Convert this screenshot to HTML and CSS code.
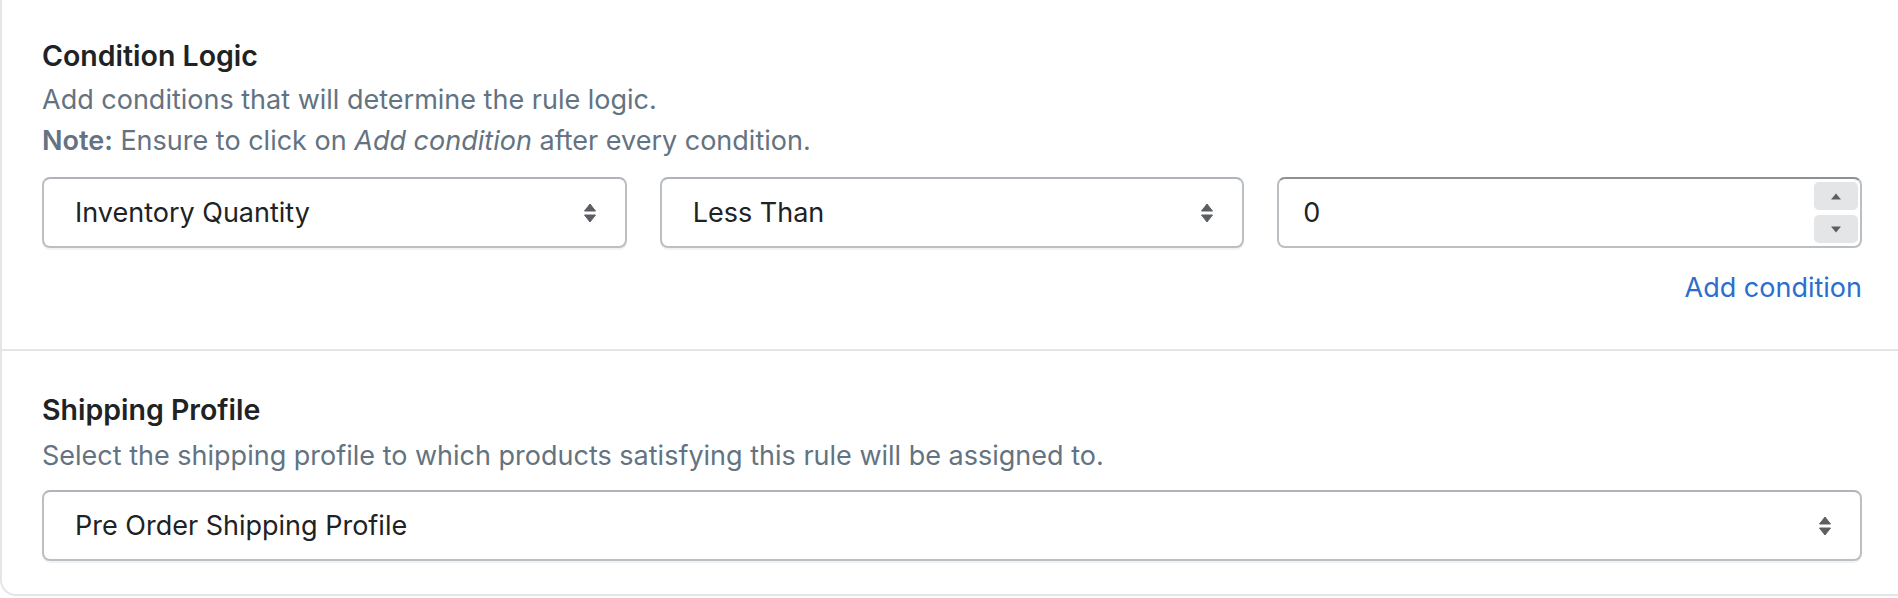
FILE: index.html
```html
<!DOCTYPE html>
<html lang="en">
<head>
<meta charset="utf-8">
<title>Rule</title>
<link rel="stylesheet" href="styles.css">
</head>
<body>
<div class="card">
  <section class="section section-first">
    <h2 class="heading">Condition Logic</h2>
    <p class="help">Add conditions that will determine the rule logic.</p>
    <p class="help"><strong>Note:</strong> Ensure to click on <em>Add condition</em> after every condition.</p>
    <div class="condition-row">
      <div class="select">
        <span class="select-value">Inventory Quantity</span>
        <svg class="select-arrows" width="12" height="20" viewBox="0 0 12 20"><path d="M6 1 L11.5 8 H0.5 Z M6 19 L11.5 12 H0.5 Z" fill="#5c5f62" stroke="#5c5f62" stroke-width="1" stroke-linejoin="round"/></svg>
      </div>
      <div class="select">
        <span class="select-value">Less Than</span>
        <svg class="select-arrows" width="12" height="20" viewBox="0 0 12 20"><path d="M6 1 L11.5 8 H0.5 Z M6 19 L11.5 12 H0.5 Z" fill="#5c5f62" stroke="#5c5f62" stroke-width="1" stroke-linejoin="round"/></svg>
      </div>
      <div class="number-input">
        <span class="input-value">0</span>
        <div class="spinner">
          <div class="spin-btn"><svg width="12" height="7" viewBox="0 0 12 7"><path d="M6 0.5 L11 6.5 H1 Z" fill="#5c5f62"/></svg></div>
          <div class="spin-btn"><svg width="12" height="7" viewBox="0 0 12 7"><path d="M6 6.5 L11 0.5 H1 Z" fill="#5c5f62"/></svg></div>
        </div>
      </div>
    </div>
    <div class="link-row"><a class="link" href="#">Add condition</a></div>
  </section>
  <section class="section section-second">
    <h2 class="heading">Shipping Profile</h2>
    <p class="help">Select the shipping profile to which products satisfying this rule will be assigned to.</p>
    <div class="select select-wide">
      <span class="select-value">Pre Order Shipping Profile</span>
      <svg class="select-arrows" width="12" height="20" viewBox="0 0 12 20"><path d="M6 1 L11.5 8 H0.5 Z M6 19 L11.5 12 H0.5 Z" fill="#5c5f62" stroke="#5c5f62" stroke-width="1" stroke-linejoin="round"/></svg>
    </div>
  </section>
</div>
</body>
</html>
```

FILE: styles.css
```css
html, body {
  margin: 0;
  padding: 0;
  background: #ffffff;
}

body {
  font-family: Inter, "Noto Sans", "Liberation Sans", sans-serif;
  color: #202223;
  font-size: 27px;
  overflow: hidden;
}

.card {
  border-left: 2px solid #e4e5e7;
  border-bottom: 2px solid #e4e5e7;
  border-bottom-left-radius: 16px;
  background: #ffffff;
}

.section {
  padding: 36px 36px 0 40px;
}

.section-first {
  padding-bottom: 41px;
  border-bottom: 2px solid #e4e5e7;
}

.section-second {
  padding-top: 39px;
  padding-bottom: 33px;
}

.heading {
  margin: 0 0 3px 0;
  font-size: 28.5px;
  line-height: 40px;
  font-weight: 600;
  color: #202223;
}

.section-second .heading {
  margin-bottom: 5px;
}

.help {
  margin: 0;
  font-size: 27px;
  line-height: 41px;
  color: #637381;
}

.help strong {
  font-weight: 600;
}

.condition-row {
  margin-top: 16px;
  display: grid;
  grid-template-columns: 1fr 1fr 1fr;
  column-gap: 33px;
}

.section-second .select {
  margin-top: 14px;
}

.select {
  box-sizing: border-box;
  height: 71px;
  border: 2px solid #babfc3;
  border-top-color: #aeb4b9;
  border-radius: 8px;
  box-shadow: 0 2px 0 rgba(22, 29, 37, 0.05);
  display: flex;
  align-items: center;
  justify-content: space-between;
  padding: 0 29px 0 31px;
  background: #ffffff;
}

.select-value {
  font-size: 27px;
  color: #202223;
}

.number-input {
  box-sizing: border-box;
  height: 71px;
  border: 2px solid #babfc3;
  border-top-color: #8c9196;
  border-radius: 8px;
  display: flex;
  align-items: stretch;
  justify-content: space-between;
  padding: 3px 2px 3px 24px;
  background: #ffffff;
}

.input-value {
  align-self: center;
  font-size: 27px;
  color: #202223;
}

.spinner {
  display: flex;
  flex-direction: column;
  gap: 5px;
  width: 44px;
}

.spin-btn {
  flex: 1;
  background: #e4e5e7;
  border-radius: 5px;
  display: flex;
  align-items: center;
  justify-content: center;
}

.link-row {
  margin-top: 19px;
  display: flex;
  justify-content: flex-end;
  line-height: 41px;
}

.link {
  color: #2c6ecb;
  text-decoration: none;
  font-size: 27px;
}
```
